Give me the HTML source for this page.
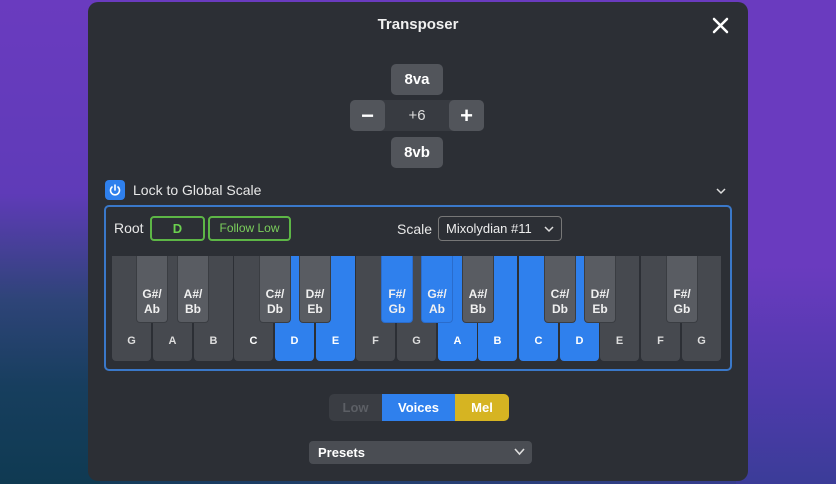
<!DOCTYPE html>
<html><head><meta charset="utf-8"><style>
*{margin:0;padding:0;box-sizing:border-box}
body{width:836px;height:484px;overflow:hidden;position:relative;font-family:"Liberation Sans",sans-serif;background:linear-gradient(90deg,#0f3a52,#253f70 50%,#3b3c98)}
.bgl{position:absolute;left:0;top:0;width:100px;height:484px;background:linear-gradient(180deg,#6a3bbf 0%,#5f3bb8 40%,#2e4478 62%,#173e5e 80%,#0f3a52 100%)}
.bgr{position:absolute;right:0;top:0;width:100px;height:484px;background:linear-gradient(180deg,#6a3bbf 0%,#6a3bbf 55%,#4f3aac 80%,#3b3c98 100%)}
.bgt{position:absolute;left:0;top:0;width:836px;height:10px;background:#6a3bbf}
.panel{position:absolute;left:88px;top:2px;width:660px;height:479px;background:#2c2f35;border-radius:10px}
.abs{position:absolute}
.t{color:#f0f0f0;font-weight:bold}
.btn{position:absolute;background:#52555b;border-radius:5px;color:#fff;font-weight:bold;font-size:15px;display:flex;align-items:center;justify-content:center}
.wk{position:absolute;top:256px;height:105px;width:39px;background:#46494f;border-radius:0 0 4px 4px;color:#ddd;font-size:11px;font-weight:bold;text-align:center;padding-top:79px}
.wk.b{background:#2f80ed;color:#fff}
.bk{position:absolute;top:256px;height:67px;width:32px;background:#595c62;border:1px solid #3a3d42;border-top:none;border-radius:0 0 4px 4px;color:#f0f0f0;font-size:12px;font-weight:bold;text-align:center;padding-top:31px;line-height:15px}
.bk.b{background:#2f80ed;border-color:#2a6ccc}
</style></head><body>
<div class="bgt"></div><div class="bgl"></div><div class="bgr"></div>
<div class="panel"></div>
<div class="abs t" style="left:0;width:836px;top:16px;text-align:center;font-size:15px">Transposer</div>
<svg class="abs" style="left:712px;top:17px" width="17" height="17"><path d="M2 2L15 15M15 2L2 15" stroke="#fff" stroke-width="2.5" stroke-linecap="round"/></svg>
<div class="btn" style="left:391px;top:64px;width:52px;height:31px">8va</div>
<div class="abs" style="left:350px;top:100px;width:134px;height:31px;background:#383b41;border-radius:5px"></div>
<div class="btn" style="left:350px;top:100px;width:35px;height:31px;font-size:22px">−</div>
<div class="abs" style="left:385px;top:107px;width:64px;text-align:center;color:#ddd;font-size:15px">+6</div>
<div class="btn" style="left:449px;top:100px;width:35px;height:31px;font-size:22px">+</div>
<div class="btn" style="left:391px;top:137px;width:52px;height:31px">8vb</div>
<div class="abs" style="left:105px;top:180px;width:20px;height:20px;background:#2f80ed;border-radius:4px"></div>
<svg class="abs" style="left:105px;top:180px" width="20" height="20"><path d="M7 7A4.5 4.5 0 1 0 13 7" fill="none" stroke="#fff" stroke-width="1.6" stroke-linecap="round"/><path d="M10 5V10" stroke="#fff" stroke-width="1.6" stroke-linecap="round"/></svg>
<div class="abs" style="left:133px;top:182px;color:#e8e8e8;font-size:14px">Lock to Global Scale</div>
<svg class="abs" style="left:715px;top:186px" width="12" height="10"><path d="M2 3L6 7L10 3" fill="none" stroke="#ddd" stroke-width="1.5"/></svg>
<div class="abs" style="left:104px;top:205px;width:628px;height:166px;border:2px solid #3a78c9;border-radius:5px"></div>
<div class="abs" style="left:114px;top:220px;color:#e8e8e8;font-size:14px">Root</div>
<div class="abs" style="left:150px;top:216px;width:55px;height:25px;border:2px solid #5db646;border-radius:4px;color:#6bd14e;font-weight:bold;font-size:13px;text-align:center;line-height:21px">D</div>
<div class="abs" style="left:208px;top:216px;width:83px;height:25px;border:2px solid #5db646;border-radius:4px;color:#7bcf5c;font-size:12px;text-align:center;line-height:21px">Follow Low</div>
<div class="abs" style="left:397px;top:221px;color:#e8e8e8;font-size:14px">Scale</div>
<div class="abs" style="left:438px;top:216px;width:124px;height:25px;border:1px solid #777;border-radius:4px;color:#eee;font-size:13px;line-height:23px;padding-left:7px">Mixolydian #11</div>
<svg class="abs" style="left:543px;top:225px" width="12" height="9"><path d="M2 2L6 6L10 2" fill="none" stroke="#ddd" stroke-width="1.5"/></svg>
<div class="wk" style="left:112px">G</div><div class="wk" style="left:153px">A</div><div class="wk" style="left:194px">B</div><div class="wk" style="left:234px;color:#fff">C</div><div class="wk b" style="left:275px">D</div><div class="wk b" style="left:316px">E</div><div class="wk" style="left:356px">F</div><div class="wk" style="left:397px">G</div><div class="wk b" style="left:438px">A</div><div class="wk b" style="left:478px">B</div><div class="wk b" style="left:519px">C</div><div class="wk b" style="left:560px">D</div><div class="wk" style="left:600px">E</div><div class="wk" style="left:641px">F</div><div class="wk" style="left:682px">G</div>
<div class="bk" style="left:136px">G#/<br>Ab</div><div class="bk" style="left:177px">A#/<br>Bb</div><div class="bk" style="left:259px">C#/<br>Db</div><div class="bk" style="left:299px">D#/<br>Eb</div><div class="bk b" style="left:381px">F#/<br>Gb</div><div class="bk b" style="left:421px">G#/<br>Ab</div><div class="bk" style="left:462px">A#/<br>Bb</div><div class="bk" style="left:544px">C#/<br>Db</div><div class="bk" style="left:584px">D#/<br>Eb</div><div class="bk" style="left:666px">F#/<br>Gb</div>
<div class="abs" style="left:329px;top:394px;width:53px;height:27px;background:#3a3d43;border-radius:5px 0 0 5px;color:#5c5f65;font-size:13px;font-weight:bold;text-align:center;line-height:27px">Low</div>
<div class="abs" style="left:382px;top:394px;width:73px;height:27px;background:#2f80ed;color:#fff;font-size:13px;font-weight:bold;text-align:center;line-height:27px">Voices</div>
<div class="abs" style="left:455px;top:394px;width:54px;height:27px;background:#d6b422;border-radius:0 5px 5px 0;color:#fff;font-size:13px;font-weight:bold;text-align:center;line-height:27px">Mel</div>
<div class="abs" style="left:309px;top:441px;width:223px;height:23px;background:#4a4d53;border-radius:4px;color:#fff;font-size:13px;font-weight:bold;line-height:23px;padding-left:9px">Presets</div>
<svg class="abs" style="left:513px;top:447px" width="13" height="10"><path d="M2 2L6.5 7L11 2" fill="none" stroke="#ddd" stroke-width="1.6"/></svg>
</body></html>
